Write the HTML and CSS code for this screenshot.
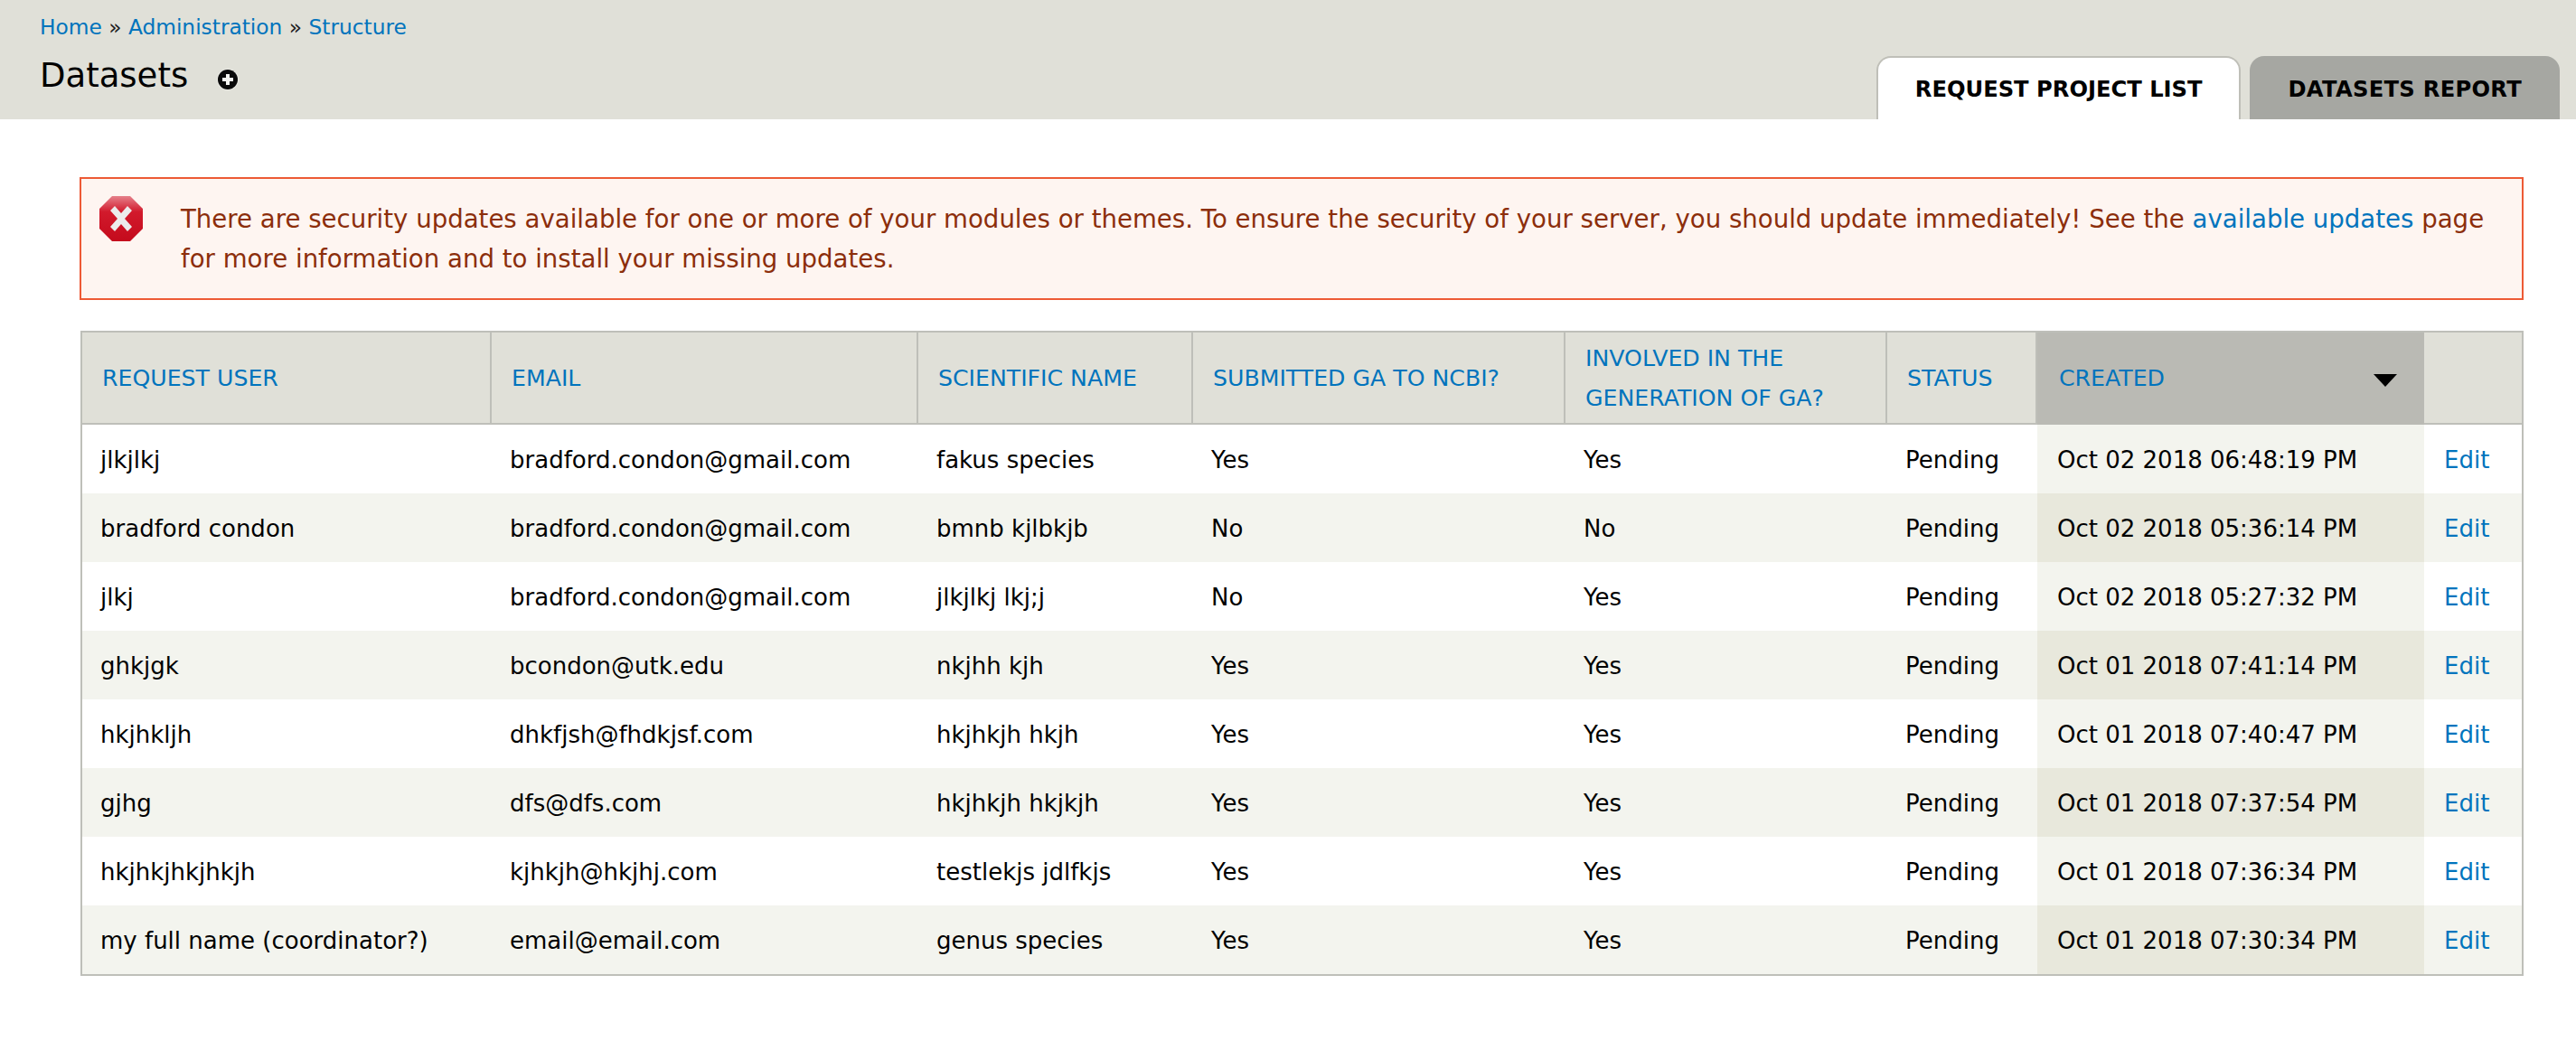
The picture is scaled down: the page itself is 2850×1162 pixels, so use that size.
FILE: index.html
```html
<!DOCTYPE html>
<html lang="en">
<head>
<meta charset="utf-8">
<title>Datasets</title>
<link rel="stylesheet" href="styles.css">
</head>
<body>
<header class="head">
  <div class="head-left">
    <nav class="crumbs"><a href="#">Home</a> » <a href="#">Administration</a> » <a href="#">Structure</a></nav>
    <h1 class="title">Datasets
      <svg class="plus" viewBox="0 0 24 24" width="24" height="24"><circle cx="12" cy="12" r="12" fill="#f4f4f0" opacity=".5"/><circle cx="12" cy="12" r="11" fill="#0a0a0a"/><path d="M10 6h4v4h4v4h-4v4h-4v-4H6v-4h4z" fill="#f4f4f0"/></svg>
    </h1>
  </div>
  <ul class="tabs">
    <li class="tab tab-active"><a href="#">REQUEST PROJECT LIST</a></li>
    <li class="tab tab-plain"><a href="#">DATASETS REPORT</a></li>
  </ul>
</header>
<main class="main">
  <div class="alert">
    <svg class="alert-icon" viewBox="0 0 48 50" width="48" height="50">
      <defs><linearGradient id="red" x1="0" y1="0" x2="0" y2="1"><stop offset="0" stop-color="#e5808a"/><stop offset=".35" stop-color="#d21a2c"/><stop offset="1" stop-color="#c40a1c"/></linearGradient></defs>
      <path d="M14 0h20l14 14v22L34 50H14L0 36V14z" fill="url(#red)"/>
      <path d="M12 16l5-5 7 8 7-8 5 5-8 9 8 9-5 5-7-8-7 8-5-5 8-9z" fill="#ececec"/>
    </svg>
    <p class="alert-text">There are security updates available for one or more of your modules or themes. To ensure the security of your server, you should update immediately! See the <a href="#">available updates</a> page for more information and to install your missing updates.</p>
  </div>
  <table class="grid">
    <colgroup>
      <col class="c1"><col class="c2"><col class="c3"><col class="c4"><col class="c5"><col class="c6"><col class="c7"><col class="c8">
    </colgroup>
    <thead>
      <tr>
        <th><a href="#">REQUEST USER</a></th>
        <th><a href="#">EMAIL</a></th>
        <th><a href="#">SCIENTIFIC NAME</a></th>
        <th><a href="#">SUBMITTED GA TO NCBI?</a></th>
        <th><a href="#">INVOLVED IN THE GENERATION OF GA?</a></th>
        <th><a href="#">STATUS</a></th>
        <th class="sorted"><div class="sort-cell"><a href="#">CREATED</a><span class="arrow"></span></div></th>
        <th class="last"></th>
      </tr>
    </thead>
    <tbody>
      <tr><td>jlkjlkj</td><td>bradford.condon@gmail.com</td><td>fakus species</td><td>Yes</td><td>Yes</td><td>Pending</td><td class="on">Oct 02 2018 06:48:19 PM</td><td class="act"><a href="#">Edit</a></td></tr>
      <tr><td>bradford condon</td><td>bradford.condon@gmail.com</td><td>bmnb kjlbkjb</td><td>No</td><td>No</td><td>Pending</td><td class="on">Oct 02 2018 05:36:14 PM</td><td class="act"><a href="#">Edit</a></td></tr>
      <tr><td>jlkj</td><td>bradford.condon@gmail.com</td><td>jlkjlkj lkj;j</td><td>No</td><td>Yes</td><td>Pending</td><td class="on">Oct 02 2018 05:27:32 PM</td><td class="act"><a href="#">Edit</a></td></tr>
      <tr><td>ghkjgk</td><td>bcondon@utk.edu</td><td>nkjhh kjh</td><td>Yes</td><td>Yes</td><td>Pending</td><td class="on">Oct 01 2018 07:41:14 PM</td><td class="act"><a href="#">Edit</a></td></tr>
      <tr><td>hkjhkljh</td><td>dhkfjsh@fhdkjsf.com</td><td>hkjhkjh hkjh</td><td>Yes</td><td>Yes</td><td>Pending</td><td class="on">Oct 01 2018 07:40:47 PM</td><td class="act"><a href="#">Edit</a></td></tr>
      <tr><td>gjhg</td><td>dfs@dfs.com</td><td>hkjhkjh hkjkjh</td><td>Yes</td><td>Yes</td><td>Pending</td><td class="on">Oct 01 2018 07:37:54 PM</td><td class="act"><a href="#">Edit</a></td></tr>
      <tr><td>hkjhkjhkjhkjh</td><td>kjhkjh@hkjhj.com</td><td>testlekjs jdlfkjs</td><td>Yes</td><td>Yes</td><td>Pending</td><td class="on">Oct 01 2018 07:36:34 PM</td><td class="act"><a href="#">Edit</a></td></tr>
      <tr><td>my full name (coordinator?)</td><td>email@email.com</td><td>genus species</td><td>Yes</td><td>Yes</td><td>Pending</td><td class="on">Oct 01 2018 07:30:34 PM</td><td class="act"><a href="#">Edit</a></td></tr>
    </tbody>
  </table>
</main>
</body>
</html>
```
FILE: styles.css
```css
* { box-sizing: border-box; }
html, body { margin: 0; background: #fff; }
body {
  font-family: "DejaVu Sans", sans-serif;
  font-size: 26px;
  color: #000;
}
a { color: #0074bd; text-decoration: none; }

.head {
  height: 132px;
  background: #e0e0d8;
  display: flex;
  justify-content: space-between;
  align-items: flex-end;
  padding: 0 18px 0 44px;
}
.head-left { align-self: flex-start; padding-top: 15px; }
.crumbs { font-size: 23.3px; line-height: 30px; color: #222; }
.title {
  margin: 14px 0 0;
  font-size: 37px;
  font-weight: 400;
  line-height: 50px;
  display: flex;
  align-items: center;
}
.plus { margin: 8px 0 0 32px; }
.tabs { list-style: none; display: flex; gap: 10px; margin: 0; padding: 0; }
.tab {
  height: 70px;
  padding: 0 41px;
  border-radius: 16px 16px 0 0;
  background: #a6a7a2;
  font-size: 24.2px;
  font-weight: 700;
  line-height: 74px;
}
.tab a { color: #000; }
.tab-active {
  background: #fff;
  border: 2px solid #bfbfb8;
  border-bottom: 0;
  line-height: 70px;
}
.tab-plain { padding: 0 42px; letter-spacing: .3px; }

.main { padding: 64px 58px 0 88px; }
.alert {
  height: 136px;
  display: flex;
  gap: 42px;
  align-items: flex-start;
  padding: 19px 20px 0;
  background: #fef5f1;
  border: 2px solid #ed5a35;
  color: #8c2e0b;
}
.alert-icon { flex: none; }
.alert-text { margin: 4px 0 0; font-size: 27.6px; line-height: 44px; }

.grid {
  margin: 34px 0 0 1px;
  width: 2703px;
  table-layout: fixed;
  border-collapse: separate;
  border-spacing: 0;
  border: 2px solid #bebfb9;
}
.c1 { width: 453px; } .c2 { width: 472px; } .c3 { width: 304px; } .c4 { width: 412px; }
.c5 { width: 356px; } .c6 { width: 166px; } .c7 { width: 428px; } .c8 { width: 108px; }
th {
  height: 102px;
  padding: 1px 22px 0;
  background: #e0e0d8;
  border-right: 2px solid #bebfb9;
  border-bottom: 2px solid #bebfb9;
  font-size: 25.2px;
  font-weight: 400;
  text-align: left;
  line-height: 44px;
  vertical-align: middle;
}
th.sorted { background: #babab4; border-right: 0; border-bottom-color: #babab4; padding: 1px 30px 0 24px; box-shadow: 2px 0 0 #babab4; }
th.last { border-right: 0; }
.sort-cell { display: flex; justify-content: space-between; align-items: center; }
.arrow { width: 0; height: 0; border-style: solid; border-width: 14px 13px 0; border-color: #000 transparent transparent; margin-top: 4px; }
td { height: 76px; padding: 2px 20px 0; white-space: nowrap; }
td.on, td.act { padding-left: 22px; }
tbody tr:nth-child(even) td { background: #f3f4ee; }
td.on { background: #f3f4ee; }
tbody tr:nth-child(even) td.on { background: #e8e8dc; }
```
